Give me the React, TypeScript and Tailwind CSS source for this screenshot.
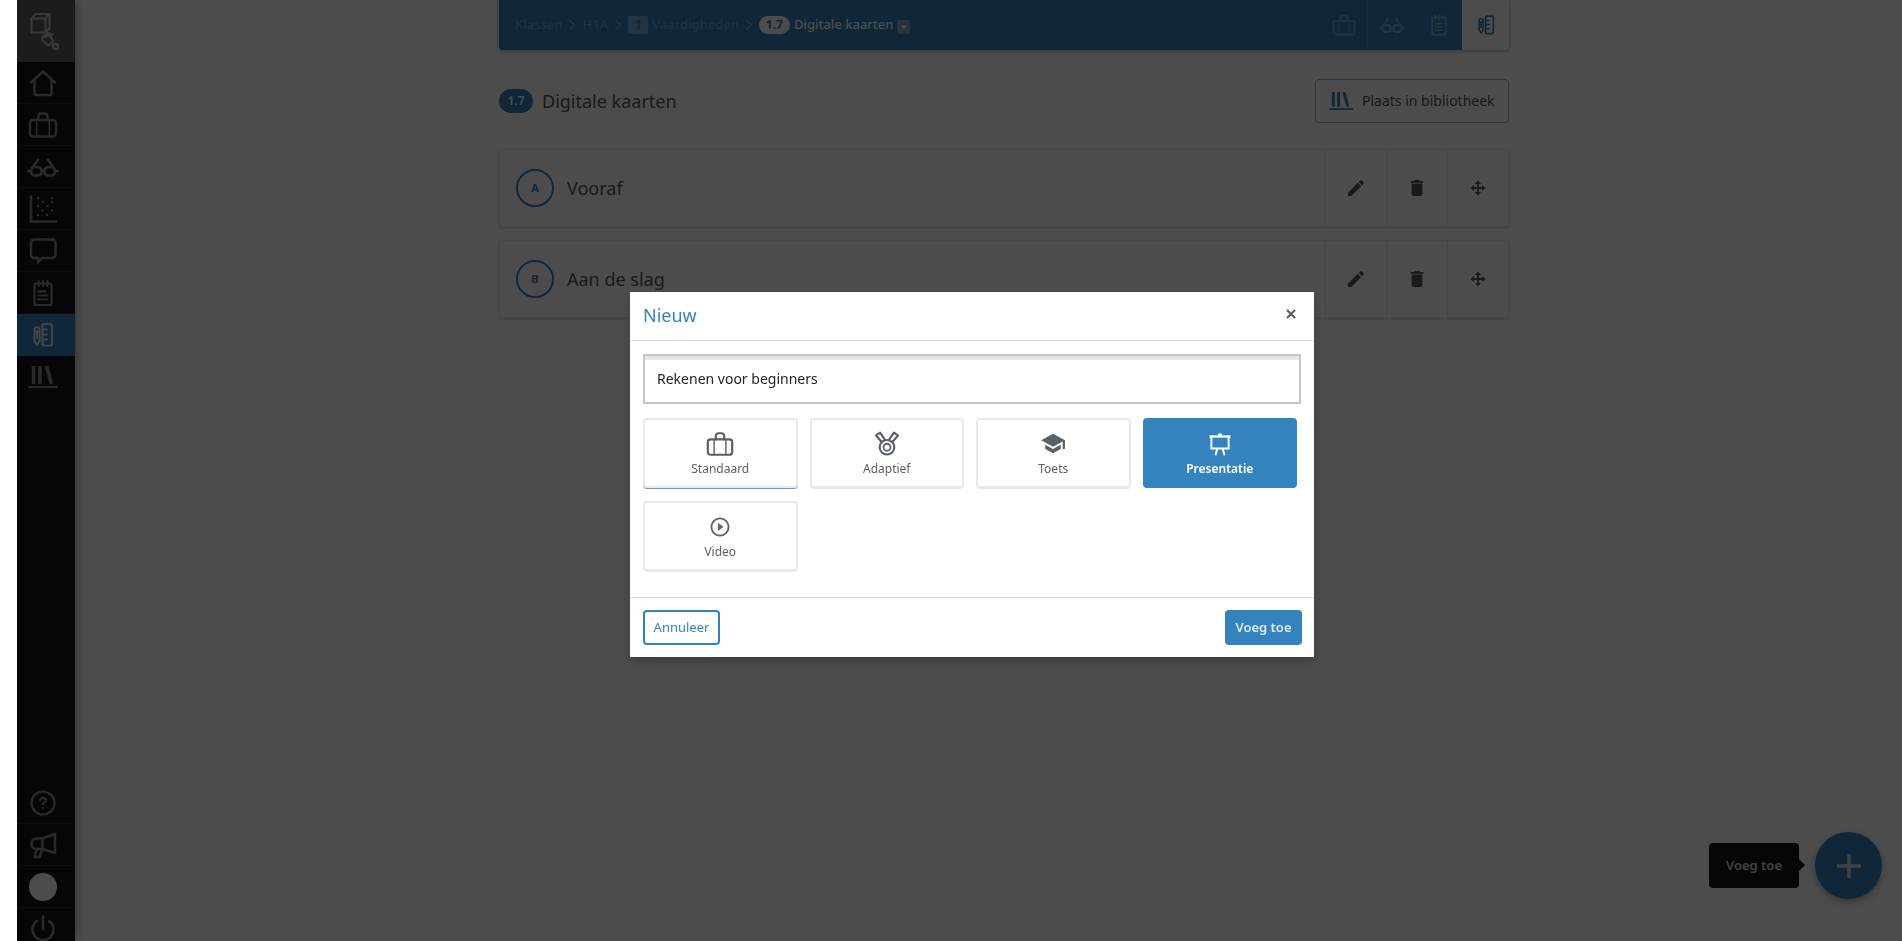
import { useState } from "react";
import type { ReactNode } from "react";

type IconName =
  | "home"
  | "case"
  | "glasses"
  | "scatter"
  | "chat"
  | "notes"
  | "tools"
  | "library"
  | "help"
  | "megaphone"
  | "power"
  | "medal"
  | "cap"
  | "easel"
  | "play";

// All icons share a 32x32 canvas.
const icons: Record<IconName, ReactNode> = {
  home: <path d="M4 15.500 16 4.500l12 11M7.500 13v13.500q0 1.500 1.500 1.500h14q1.500 0 1.500-1.500V13" strokeWidth="2.400" />,
  case: (
    <>
      <rect x="3" y="11" width="26" height="16.500" rx="3" strokeWidth="2.300" />
      <path d="M11.500 11V7.500q0-3 3-3h3q3 0 3 3V11" strokeWidth="2.300" />
      <path d="M9.700 11v16.500M22.300 11v16.500" strokeWidth="1.500" />
    </>
  ),
  glasses: (
    <g strokeWidth="2.600">
      <rect x="4" y="16" width="10.500" height="8.500" rx="4" />
      <rect x="17.500" y="16" width="10.500" height="8.500" rx="4" />
      <path d="M1 20h3M28 20h3M14.500 20h3M5.500 16.500 11 9M26.500 16.500 21 9" />
    </g>
  ),
  scatter: (
    <>
      <path d="M4 3.500v25h25" strokeWidth="2.600" />
      <path
        d="M11 13h.01M11 22h.01M16 9h.01M15.500 17.500h.01M20.500 13h.01M20 22h.01M25 9h.01M25 17.500h.01M25 5h.01M11 5h.01"
        strokeWidth="2.400"
      />
    </>
  ),
  chat: (
    <path
      d="M8 4.500h16.500q4 0 4 4v10.500q0 4-4 4H15L11 27.500V23H8q-4 0-4-4V8.500q0-4 4-4z"
      strokeWidth="2.500"
    />
  ),
  notes: (
    <>
      <rect x="7.500" y="6.500" width="17" height="21.500" rx="1.500" strokeWidth="2.200" />
      <path d="M11.500 4v5M16 4v5M20.500 4v5" strokeWidth="2" />
      <path d="M11.500 14.500h7M11.500 18.500h9M11.500 22.500h9" strokeWidth="2" />
    </>
  ),
  tools: (
    <>
      <rect x="15.500" y="5" width="9.500" height="21.500" rx="1.500" strokeWidth="2.200" />
      <path d="M16 10.500h4M16 15.500h4M16 20.500h4" strokeWidth="1.800" />
      <path d="M7.500 10.500q0-2.500 2.500-2.500t2.500 2.500V22L10 26l-2.500-4zM7.500 12.500h5M10 13v6" strokeWidth="2" />
    </>
  ),
  library: (
    <>
      <path d="M6.500 5v18M13 5v18M19.500 5l5 18" strokeWidth="3.600" strokeLinecap="butt" />
      <path d="M1.500 26h29" strokeWidth="2.200" strokeLinecap="butt" />
    </>
  ),
  help: (
    <>
      <circle cx="16" cy="16" r="11.500" strokeWidth="2.200" />
      <path d="M13.200 13.500q0-2.700 2.800-2.700t2.800 2.400q0 1.400-1.400 2.200T16 17.600M16 20.900v.1" strokeWidth="2.200" />
    </>
  ),
  megaphone: (
    <path
      d="M15.500 9.500 28 5v19l-12.500-4zM15.500 9.500H9.500q-5 0-5 5.250t5 5.250h6M9.500 20.500 7.500 28h5l2.500-7.500"
      strokeWidth="2.500"
    />
  ),
  power: <path d="M16 3.500v13M10 8a10.500 10.500 0 1 0 12 0" strokeWidth="2.600" />,
  medal: (
    <>
      <circle cx="16" cy="20" r="9" strokeWidth="2.600" />
      <circle cx="16" cy="20" r="4.300" strokeWidth="2.200" />
      <path d="M9.500 13.500 2.500 5.500l5-3.500 6 9M22.500 13.500l7-8-5-3.500-6 9" strokeWidth="2.600" />
    </>
  ),
  cap: (
    <g fill="currentColor" stroke="none">
      <path d="M16 3.500 1.500 11.500 16 19.500l12-6.600V22h2.700V11.500z" />
      <path d="M6.500 17v5L16 27.500l9.500-5.500v-5L16 22.300z" />
    </g>
  ),
  easel: (
    <>
      <path d="M2 6h28" strokeWidth="3" strokeLinecap="butt" />
      <path d="M4.500 6v16h23V6" strokeWidth="2.600" strokeLinejoin="miter" />
      <path d="M14 4q2-3 4 0z" strokeWidth="2" />
      <path d="M12.500 22 10 31M19.500 22l2.500 9" strokeWidth="2.600" strokeLinecap="butt" />
    </>
  ),
  play: (
    <>
      <circle cx="16" cy="16" r="12.500" strokeWidth="2.600" />
      <path d="M13.500 11v10l6.500-5z" fill="currentColor" strokeWidth="1" />
    </>
  ),
};

function Icon({ name, className }: { name: IconName; className: string }) {
  return (
    <svg
      viewBox="0 0 32 32"
      fill="none"
      stroke="currentColor"
      strokeLinecap="round"
      strokeLinejoin="round"
      className={className}
      aria-hidden="true"
    >
      {icons[name]}
    </svg>
  );
}

function Logo() {
  return (
    <svg
      viewBox="0 0 32 40"
      fill="none"
      stroke="currentColor"
      strokeWidth="2"
      strokeLinejoin="round"
      className="h-10 w-8"
      aria-hidden="true"
    >
      <path d="M2.500 7.500h14V21.500h-14zM2.500 7.500l4-4.500h14l-4 4.500M20.500 3v14l-4 4.500" />
      <path d="m13.500 26 6-4 5 8.500-5.500 4-5.500-5.500zM14.500 26l6-1.500 4 6M19.500 22l4.500 2" />
      <circle cx="26.500" cy="35.500" r="2.500" strokeWidth="2.400" />
    </svg>
  );
}

const menu: { icon: IconName; label: string }[] = [
  { icon: "home", label: "Home" },
  { icon: "case", label: "Lessen" },
  { icon: "glasses", label: "Nakijken" },
  { icon: "scatter", label: "Resultaten" },
  { icon: "chat", label: "Berichten" },
  { icon: "notes", label: "Planning" },
  { icon: "tools", label: "Ontwerpen" },
  { icon: "library", label: "Bibliotheek" },
];

function Sidebar() {
  const item = "flex h-[42px] items-center justify-center border-b pr-[6px]";

  return (
    <nav className="flex h-screen w-[58px] shrink-0 flex-col overflow-hidden bg-[#17171d] text-[#8a8e8e] shadow-[5px_0_8px_-3px_rgba(0,0,0,0.3)]">
      <a
        href="#"
        aria-label="Start"
        className="flex h-[62px] shrink-0 items-center justify-center bg-[#5a5e62] pr-[3px] text-[#c0c4c6]"
      >
        <Logo />
      </a>
      {menu.map(({ icon, label }) => (
        <a
          key={icon}
          href="#"
          aria-label={label}
          className={
            icon === "tools"
              ? `${item} border-[#3583be] bg-[#3583be] text-[#dfe3e6]`
              : icon === "library"
                ? `${item} border-transparent`
                : `${item} border-[#2a2a30]`
          }
        >
          <Icon name={icon} className="size-8" />
        </a>
      ))}
      <div className="mt-auto -mb-[9px]">
        <a href="#" aria-label="Help" className={`${item} border-[#2a2a30]`}>
          <Icon name="help" className="size-8" />
        </a>
        <a href="#" aria-label="Nieuws" className={`${item} border-[#2a2a30]`}>
          <Icon name="megaphone" className="size-8" />
        </a>
        <a href="#" aria-label="Profiel" className={`${item} border-[#2a2a30]`}>
          <span className="size-7 rounded-full bg-white" />
        </a>
        <a href="#" aria-label="Uitloggen" className={`${item} border-transparent`}>
          <Icon name="power" className="size-8" />
        </a>
      </div>
    </nav>
  );
}

function Chevron() {
  return (
    <svg viewBox="0 0 8 12" className="mx-[6px] h-3 w-2" fill="none" stroke="currentColor" strokeWidth="2">
      <path d="m1.500 1.500 5 4.500-5 4.500" />
    </svg>
  );
}

function TopBar() {
  return (
    <header className="flex h-[50px] overflow-hidden rounded-b-sm bg-[#3583be] shadow-[0_1px_4px_rgba(0,0,0,0.3)]">
      <nav className="flex flex-1 items-center pl-4 text-[13px] font-medium text-[#6fa8d3]">
        <a href="#">Klassen</a>
        <Chevron />
        <a href="#">H1A</a>
        <Chevron />
        <a href="#" className="flex items-center gap-1">
          <span className="flex h-[18px] w-5 items-center justify-center rounded-xs bg-[#79aed6] text-xs font-bold text-[#3583be]">
            1
          </span>
          Vaardigheden
        </a>
        <Chevron />
        <a href="#" className="flex items-center gap-1 text-white">
          <span className="flex h-[18px] w-[31px] items-center justify-center rounded-full bg-white text-xs font-bold text-[#3583be]">
            1.7
          </span>
          Digitale kaarten
        </a>
        <button
          aria-label="Meer"
          className="mt-1 ml-1 flex h-[14px] w-[13px] items-center justify-center rounded-xs bg-[#86aed0]"
        >
          <svg viewBox="0 0 6 4" className="h-1 w-[6px]" fill="#fff">
            <path d="M0 0h6L3 4z" />
          </svg>
        </button>
      </nav>
      <div className="flex text-[#79aed6]">
        <button aria-label="Lessen" className="flex w-[47px] items-center justify-center border-r border-[#4a91c7]">
          <Icon name="case" className="size-[26px]" />
        </button>
        <button aria-label="Nakijken" className="flex w-[47px] items-center justify-center">
          <Icon name="glasses" className="size-[26px]" />
        </button>
        <button aria-label="Planning" className="flex w-[47px] items-center justify-center">
          <Icon name="notes" className="size-[26px]" />
        </button>
        <button aria-label="Ontwerpen" className="flex w-[47px] items-center justify-center bg-white text-[#3583be]">
          <Icon name="tools" className="size-[26px]" />
        </button>
      </div>
    </header>
  );
}

function Section({ letter, title }: { letter: string; title: string }) {
  const action = "flex w-[61px] items-center justify-center border-l border-[#e6e6e6]";

  return (
    <li className="flex h-[78px] rounded-sm border border-[#efefef] text-[#55585c] shadow-[0_1px_3px_rgba(0,0,0,0.18)]">
      <div className="flex flex-1 items-center gap-[13px] pl-4">
        <span className="flex size-[38px] items-center justify-center rounded-full border-2 border-[#3583be] text-[11px] font-bold text-[#3583be]">
          {letter}
        </span>
        <h2 className="text-lg">{title}</h2>
      </div>
      <button aria-label="Bewerken" className={action}>
        <svg viewBox="3 3 18 18" className="size-4" fill="currentColor">
          <path d="M3 17.250V21h3.750L17.810 9.940l-3.750-3.750L3 17.250zM20.710 7.040a1 1 0 0 0 0-1.410l-2.340-2.340a1 1 0 0 0-1.410 0l-1.830 1.830 3.750 3.750 1.830-1.830z" />
        </svg>
      </button>
      <button aria-label="Verwijderen" className={action}>
        <svg viewBox="3 3 18 18" className="size-4" fill="currentColor">
          <path d="M6 19c0 1.100.9 2 2 2h8c1.100 0 2-.9 2-2V7H6v12zM19 4h-3.500l-1-1h-5l-1 1H5v2h14V4z" />
        </svg>
      </button>
      <button aria-label="Verplaatsen" className={action}>
        <svg viewBox="0 0 16 16" className="size-4" fill="currentColor">
          <path d="M8 .5 11 4H8.900v3.100H12V5l3.500 3L12 11V8.900H8.900V12H11l-3 3.500L5 12h2.100V8.900H4V11L.5 8 4 5v2.100h3.100V4H5z" />
        </svg>
      </button>
    </li>
  );
}

const types: { icon: IconName; label: string; size: string }[] = [
  { icon: "case", label: "Standaard", size: "size-[30px]" },
  { icon: "medal", label: "Adaptief", size: "size-[26px]" },
  { icon: "cap", label: "Toets", size: "size-[26px]" },
  { icon: "easel", label: "Presentatie", size: "size-6" },
  { icon: "play", label: "Video", size: "size-[22px]" },
];

function NewDialog() {
  const [name, setName] = useState("Rekenen voor beginners");
  const [type, setType] = useState("Presentatie");

  return (
    <form
      role="dialog"
      aria-labelledby="dialog-title"
      onSubmit={(e) => e.preventDefault()}
      className="w-[684px] bg-white shadow-[0_5px_10px_rgba(0,0,0,0.2)]"
    >
      <div className="flex h-[49px] items-center justify-between border-b border-[#dfdfdf] px-[13px] pb-[2px]">
        <h1 id="dialog-title" className="text-lg text-[#3583be]">
          Nieuw
        </h1>
        <button type="button" aria-label="Sluiten" className="px-[5px] pb-[2px] text-[#5a6069]">
          <svg viewBox="0 0 10 10" className="size-[10px]" fill="none" stroke="currentColor" strokeWidth="2.200">
            <path d="m1 1 8 8M9 1 1 9" />
          </svg>
        </button>
      </div>

      <div className="px-[13px] pt-[13px] pb-[26px]">
        <input
          type="text"
          aria-label="Naam"
          value={name}
          onChange={(e) => setName(e.target.value)}
          className="h-[50px] w-full border-2 border-[#c6c6c6] px-3 pb-[2px] text-sm text-[#222] shadow-[inset_0_4px_0_#e5e5e5] outline-none"
        />
        <div className="mt-[14px] grid grid-cols-4 gap-x-3 gap-y-[13px] pr-1">
          {types.map(({ icon, label, size }) => (
            <label
              key={label}
              className={
                "flex h-[70px] cursor-pointer flex-col items-center rounded-sm border-2 pt-2 text-xs " +
                (type === label
                  ? "border-[#3583be] bg-[#3583be] font-semibold text-white"
                  : label === "Standaard"
                    ? "border-[#e8e8e8] text-[#5a6069] shadow-[0_1px_0_#5c9fd3]"
                    : "border-[#e8e8e8] text-[#5a6069] shadow-[0_1px_0_#e8e8e8]")
              }
            >
              <input
                type="radio"
                name="type"
                value={label}
                checked={type === label}
                onChange={() => setType(label)}
                className="sr-only"
              />
              <span className="flex h-[33px] items-start pt-px">
                <span className="flex h-[30px] items-center">
                  <Icon name={icon} className={size} />
                </span>
              </span>
              {label}
            </label>
          ))}
        </div>
      </div>

      <div className="flex justify-between border-t border-[#dfdfdf] px-3 py-3">
        <button
          type="button"
          className="ml-px h-[35px] w-[77px] rounded-sm border-2 border-[#3583be] text-[13px] text-[#3583be]"
        >
          Annuleer
        </button>
        <button type="submit" className="h-[35px] w-[77px] rounded-sm bg-[#3583be] text-[13px] font-semibold text-[#dcebf6]">
          Voeg toe
        </button>
      </div>
    </form>
  );
}

export default function App() {
  return (
    <div className="flex min-h-screen bg-white pl-[17px] font-['Noto_Sans',sans-serif]">
      <Sidebar />
      <main className="flex flex-1 justify-center pl-[31px]">
        <div className="w-full max-w-[1010px]">
          <TopBar />
          <div className="mt-[29px] flex items-center justify-between text-[#55585c]">
            <div className="flex items-center gap-[9px]">
              <span className="flex h-6 w-[34px] items-center justify-center rounded-full bg-[#3583be] text-xs font-semibold text-white">
                1.7
              </span>
              <h1 className="text-lg">Digitale kaarten</h1>
            </div>
            <button className="flex h-11 w-[194px] items-center gap-2 rounded-sm border border-[#a8a8a8] pl-3 text-sm">
              <Icon name="library" className="size-[26px] text-[#3583be]" />
              Plaats in bibliotheek
            </button>
          </div>
          <ul className="mt-[26px] flex flex-col gap-[13px]">
            <Section letter="A" title="Vooraf" />
            <Section letter="B" title="Aan de slag" />
          </ul>
        </div>
      </main>

      <div className="fixed right-5 bottom-[42px] flex items-center gap-4">
        <div
          role="tooltip"
          className="relative flex h-[45px] w-[90px] items-center justify-center rounded-sm bg-[#17171d] text-[13px] font-semibold text-[#dddddd]"
        >
          Voeg toe
          <span className="absolute top-4 -right-[6px] border-y-[6px] border-l-[6px] border-y-transparent border-l-[#17171d]" />
        </div>
        <button
          aria-label="Voeg toe"
          className="flex size-[67px] items-center justify-center rounded-full bg-[#3583be] text-[#dddddd] shadow-[0_3px_8px_rgba(0,0,0,0.3)]"
        >
          <svg viewBox="0 0 24 24" className="size-6" fill="none" stroke="currentColor" strokeWidth="3.500">
            <path d="M12 0v24M0 12h24" />
          </svg>
        </button>
      </div>

      <div className="fixed inset-y-0 right-0 left-[17px] flex items-start justify-center bg-black/70 pt-[292px] pl-[25px]">
        <NewDialog />
      </div>
    </div>
  );
}
